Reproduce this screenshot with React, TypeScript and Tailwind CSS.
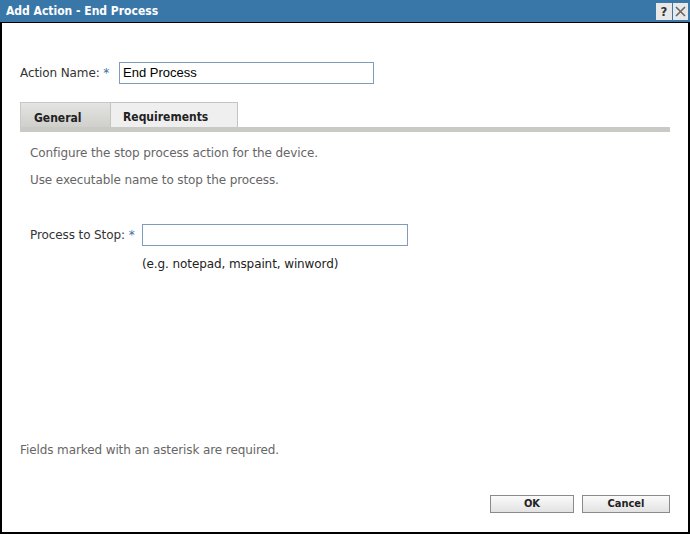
import React from "react";

export default function App() {
  const f = { fontFamily: '"DejaVu Sans Condensed", "DejaVu Sans", sans-serif' };
  const n = { fontFamily: '"DejaVu Sans", sans-serif', letterSpacing: "-0.1px" };
  return (
    <div className="w-[690px] h-[534px] bg-white flex flex-col overflow-hidden" style={f}>
      <div className="h-[22px] bg-[#3a77a9] flex items-center justify-between pl-[6px] pr-[2px] shrink-0">
        <span className="text-white font-bold text-[12px] leading-none">Add Action - End Process</span>
        <div className="flex gap-[1px] h-[17px]">
          <div className="w-[16px] h-[17px] bg-[#e8e8e8] flex items-center justify-center text-[13px] font-bold text-[#333] leading-none">?</div>
          <div className="w-[15px] h-[17px] bg-[#e8e8e8] flex items-center justify-center">
            <svg width="11" height="11" viewBox="0 0 11 11">
              <path d="M1 1 L10 10 M10 1 L1 10" stroke="#666" strokeWidth="1.6" />
            </svg>
          </div>
        </div>
      </div>
      <div className="flex-1 border-t border-black border-l-2 border-r-2 border-b-2 flex flex-col">
        <div className="flex items-center pl-[18px] pt-[39px]">
          <span className="text-[12px] text-[#333] w-[99px]" style={n}>
            Action Name: <span className="text-[#3a6ea5]">*</span>
          </span>
          <div className="w-[255px] h-[22px] border border-[#7f9db9] flex items-center pl-[3px]">
            <span className="text-[13px] text-black" style={{ fontFamily: '"Liberation Sans", Arial, sans-serif' }}>End Process</span>
          </div>
        </div>
        <div className="pl-[18px] pr-[18px] pt-[18px]">
          <div className="flex h-[25px]">
            <div className="w-[90px] bg-gradient-to-b from-[#e4e4e2] to-[#cfcfcc] border-t border-l border-[#c8c8c6] flex items-start pt-[9px] leading-none pl-[13px] text-[12px] font-bold text-[#222]">General</div>
            <div className="w-[128px] bg-[#efefef] border border-b-0 border-[#c4c4c4] flex items-start pt-[8px] leading-none pl-[12px] text-[12px] font-bold text-[#222]">Requirements</div>
          </div>
          <div className="h-[5px] bg-[#c9c9c6]" />
        </div>
        <div className="pl-[28px] pt-[12px] text-[12px] text-[#666] flex flex-col gap-[9px] leading-[18px]" style={n}>
          <div>Configure the stop process action for the device.</div>
          <div>Use executable name to stop the process.</div>
        </div>
        <div className="flex items-center pl-[28px] pt-[35px]">
          <span className="text-[12px] text-[#333] w-[112px]" style={n}>
            Process to Stop: <span className="text-[#3a6ea5]">*</span>
          </span>
          <div className="w-[266px] h-[22px] border border-[#7f9db9]" />
        </div>
        <div className="pl-[140px] pt-[9px] text-[12px] text-[#222]" style={n}>(e.g. notepad, mspaint, winword)</div>
        <div className="flex-1" />
        <div className="pl-[18px] text-[12px] text-[#666] pb-[36px]" style={n}>Fields marked with an asterisk are required.</div>
        <div className="flex justify-end gap-[8px] pr-[18px] pb-[19px]">
          <div className="w-[84px] h-[18px] border border-[#8a8a8a] bg-gradient-to-b from-[#fafafa] to-[#e2e2e2] flex items-center justify-center text-[11px] font-bold text-[#222]">OK</div>
          <div className="w-[88px] h-[18px] border border-[#8a8a8a] bg-gradient-to-b from-[#fafafa] to-[#e2e2e2] flex items-center justify-center text-[11px] font-bold text-[#222]">Cancel</div>
        </div>
      </div>
    </div>
  );
}
